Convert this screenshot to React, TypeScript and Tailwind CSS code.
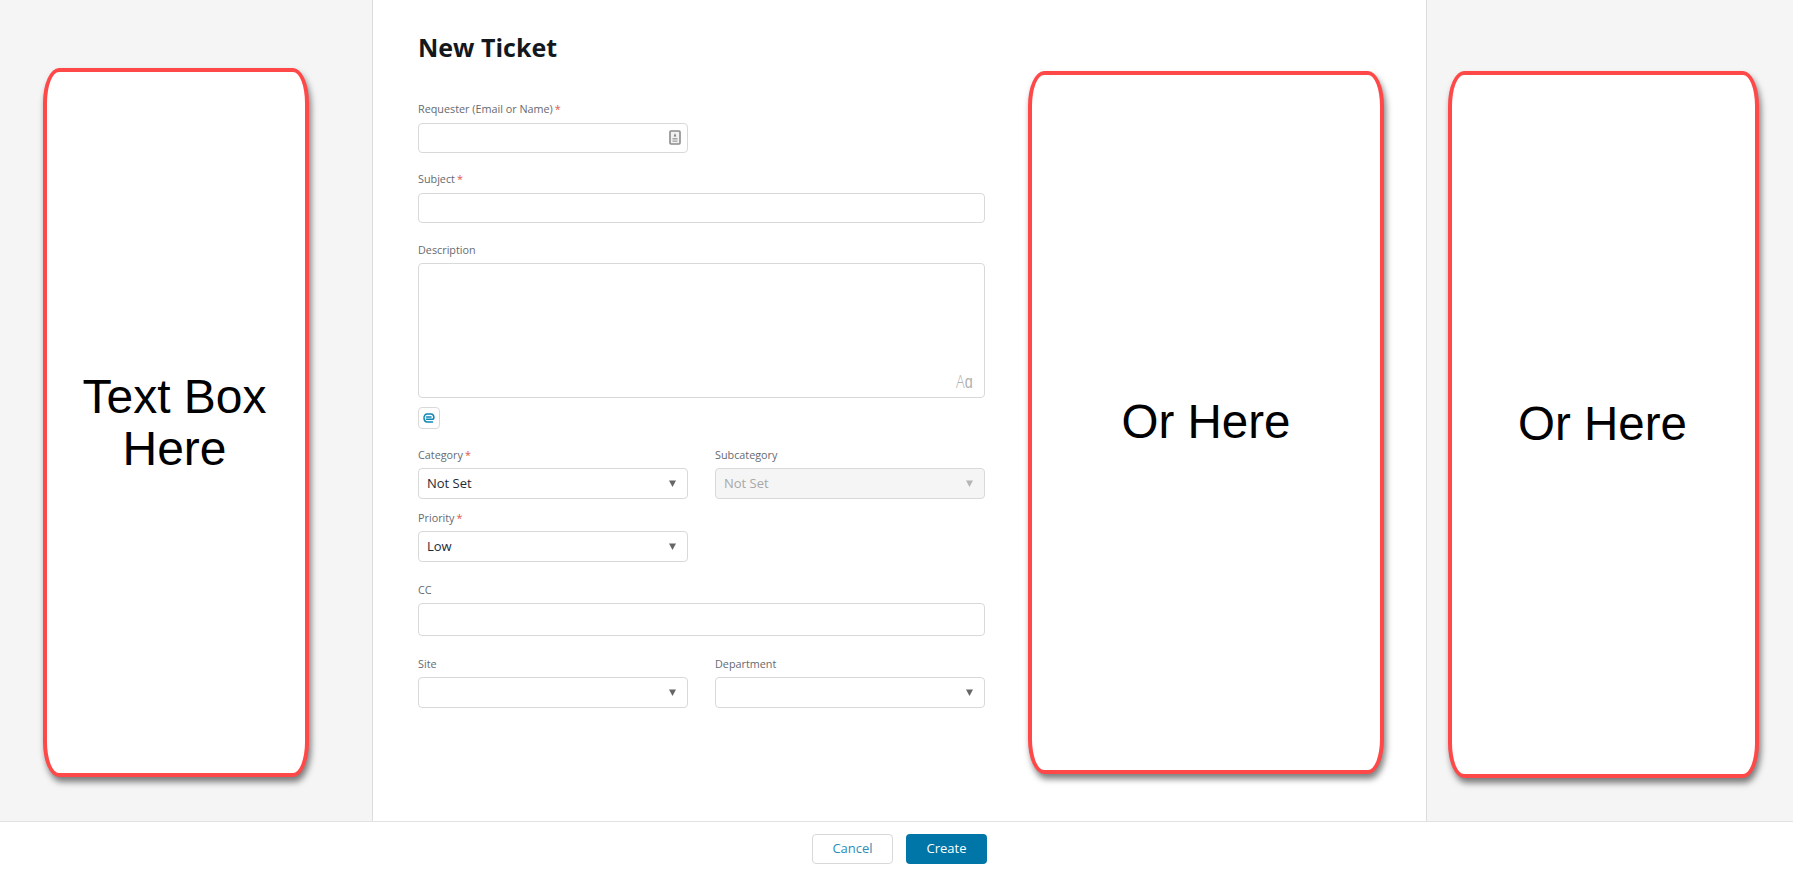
import React from 'react';

const font = "font-['Open_Sans',sans-serif]";

function Label({ text, required, low }: { text: string; required?: boolean; low?: boolean }) {
  return (
    <div className={`${low ? 'h-[17px] pt-px mb-[5px]' : 'h-4 mb-[6px]'} text-[10.8px] leading-4 text-[#666a70]`}>
      {text}
      {required && <span className="ml-[2px] text-[#e2574c]">*</span>}
    </div>
  );
}

function Arrow({ disabled }: { disabled?: boolean }) {
  return (
    <svg width="7" height="7" viewBox="0 0 7 7" className="shrink-0">
      <path d="M0 0.5H7L3.5 7Z" fill={disabled ? '#b5b5b5' : '#666666'} />
    </svg>
  );
}

function Select({ value, disabled }: { value?: string; disabled?: boolean }) {
  return (
    <div
      className={`h-[31px] flex items-center justify-between pl-2 pr-[11px] border border-[#d9d9d9] rounded-[4px] text-[13px] ${
        disabled ? 'bg-[#f5f5f5] text-[#a8a8a8]' : 'bg-white text-[#1d2b36]'
      }`}
    >
      <span>{value}</span>
      <Arrow disabled={disabled} />
    </div>
  );
}

// red annotation box drawn on top of the page
function Callout({ className, children }: { className: string; children: React.ReactNode }) {
  return (
    <div
      className={`flex items-center justify-center text-center bg-white border-4 border-[#ff4848] rounded-[16px/35px] shadow-[2px_5px_6px_rgba(0,0,0,0.5)] font-['Liberation_Sans',sans-serif] leading-[52px] text-black ${className}`}
    >
      {children}
    </div>
  );
}

export default function App() {
  return (
    <div className={`h-[869px] flex flex-col bg-white overflow-hidden ${font}`}>
      <div className="h-[821px] flex">
        {/* Left side */}
        <div className="w-[372px] shrink-0 bg-[#f5f5f5] pl-[43px] pt-[68px]">
          <Callout className="w-[266px] h-[709px] pr-[3px] text-[48px]">
            <span>
              Text Box
              <br />
              Here
            </span>
          </Callout>
        </div>

        {/* Main panel */}
        <div className="w-[1055px] shrink-0 flex bg-white border-x border-[#dcdcdc] pl-[45px]">
          <div className="w-[567px] shrink-0 pt-[31px]">
            <h1 className="h-8 mb-[38px] text-[25px] leading-8 font-bold text-[#14181d]">New Ticket</h1>

            <Label text="Requester (Email or Name)" required />
            <div className="w-[270px] h-[30px] flex items-center justify-end pr-[6px] border border-[#d9d9d9] rounded-[4px]">
              <svg width="12" height="15" viewBox="0 0 12 15" className="-mt-[2px]">
                <rect x="1" y="1" width="10" height="13" rx="1" fill="#f1f1f1" stroke="#8c8c8c" strokeWidth="1.6" />
                <path d="M6 3.2L7.3 6.6H4.7Z" fill="#777777" />
                <path d="M3.5 8h5v1.4h-5zM3.5 10.4h5v1.4h-5z" fill="#a0a0a0" />
              </svg>
            </div>

            <div className="mt-[18px]">
              <Label text="Subject" required />
              <div className="h-[30px] border border-[#d9d9d9] rounded-[4px]" />
            </div>

            <div className="mt-[18px]">
              <Label text="Description" low />
              <div className="h-[135px] flex items-end justify-end pr-[9px] pb-[6px] border border-[#d9d9d9] rounded-[4px] text-[18px] leading-5 text-[#b0b0b0]">
                <span className="font-light scale-x-[0.8]">Aɑ</span>
              </div>
            </div>

            <div className="mt-[9px] w-[22px] h-[22px] flex items-center justify-center border border-[#d9d9d9] rounded-[4px]">
              <svg width="12" height="10" viewBox="0 0 12 10" fill="none">
                <path
                  d="M3.5 6.2H9.2C10.4 6.2 10.9 5.4 10.9 4.4C10.9 2.5 9.8 1 8 1H4.2C2.2 1 1 2.8 1 4.8C1 7.2 2.4 9 4.4 9H9.5M3.5 4H8"
                  stroke="#0f86b5"
                  strokeWidth="1.5"
                  strokeLinecap="round"
                />
              </svg>
            </div>

            <div className="mt-[17px] grid grid-cols-2 gap-x-[27px]">
              <div>
                <Label text="Category" required low />
                <Select value="Not Set" />
              </div>
              <div>
                <Label text="Subcategory" low />
                <Select value="Not Set" disabled />
              </div>
            </div>

            <div className="mt-[10px] w-[270px]">
              <Label text="Priority" required low />
              <Select value="Low" />
            </div>

            <div className="mt-[19px]">
              <Label text="CC" low />
              <div className="h-[33px] border border-[#d9d9d9] rounded-[4px]" />
            </div>

            <div className="mt-[19px] grid grid-cols-2 gap-x-[27px]">
              <div>
                <Label text="Site" low />
                <Select />
              </div>
              <div>
                <Label text="Department" low />
                <Select />
              </div>
            </div>
          </div>

          <div className="ml-[43px] pt-[71px]">
            <Callout className="w-[356px] h-[703px] pb-[2px] text-[47.5px]">Or Here</Callout>
          </div>
        </div>

        {/* Right side */}
        <div className="flex-1 bg-[#f5f5f5] pl-[21px] pt-[71px]">
          <Callout className="w-[311px] h-[707px] pr-[2px] pb-[2px] text-[47.5px]">Or Here</Callout>
        </div>
      </div>

      {/* Footer */}
      <div className="h-[48px] flex justify-center gap-[13px] pt-[12px] pl-[6px] bg-white border-t border-[#e2e2e2]">
        <button className="w-[81px] h-[30px] border border-[#d9d9d9] rounded-[4px] bg-white text-[13px] text-[#2b8db8]">
          Cancel
        </button>
        <button className="w-[81px] h-[30px] rounded-[4px] bg-[#0076a8] text-[13px] font-medium text-white">
          Create
        </button>
      </div>
    </div>
  );
}
